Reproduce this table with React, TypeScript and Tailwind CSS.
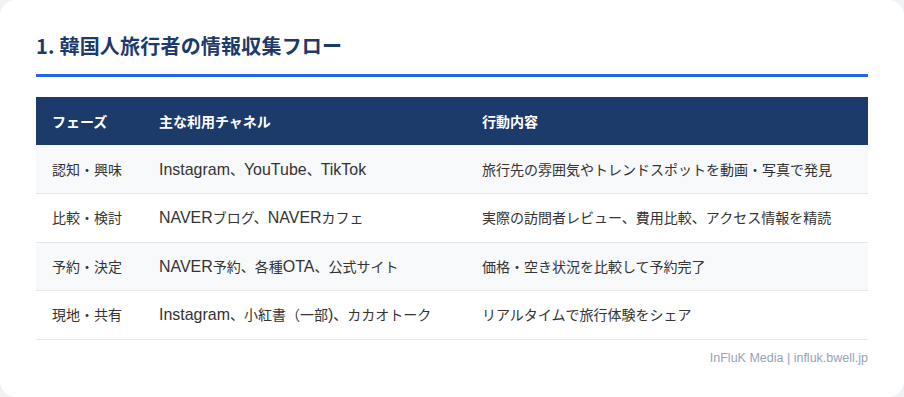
const rows = [
  ['認知・興味', 'Instagram、YouTube、TikTok', '旅行先の雰囲気やトレンドスポットを動画・写真で発見'],
  ['比較・検討', 'NAVERブログ、NAVERカフェ', '実際の訪問者レビュー、費用比較、アクセス情報を精読'],
  ['予約・決定', 'NAVER予約、各種OTA、公式サイト', '価格・空き状況を比較して予約完了'],
  ['現地・共有', 'Instagram、小紅書（一部)、カカオトーク', 'リアルタイムで旅行体験をシェア'],
]

// Latin runs are set a bit larger so they sit like the Hiragino-style Latin glyphs
const Mixed = ({ text }: { text: string }) => (
  <>
    {text.split(/([A-Za-z0-9.)]+(?: [A-Za-z0-9.]+)*)/).map((part, i) =>
      i % 2 === 1 ? (
        <span key={i} className="font-['Liberation_Sans',sans-serif] text-[1.14em] leading-none">
          {part}
        </span>
      ) : (
        <span key={i}>{part}</span>
      )
    )}
  </>
)

const App = () => {
  return (
    <div className="w-[904px] h-[397px] bg-[#f1f2f4] font-['Noto_Sans_CJK_JP',sans-serif]">
      <div className="h-full bg-white rounded-2xl px-9 pt-8">
        {/* Title */}
        <h2 className="text-[20px] leading-7 font-bold text-[#1c3a6a] pb-[14px] border-b-[3px] border-[#2563eb] tracking-[0.01em]">
          1. 韓国人旅行者の情報収集フロー
        </h2>

        {/* Table */}
        <table className="w-full mt-5 border-collapse text-[14px] text-[#333]">
          <thead>
            <tr className="bg-[#1c3a6a] text-white h-12">
              <th className="w-[107px] pl-4 text-left font-bold">フェーズ</th>
              <th className="w-[323px] pl-4 text-left font-bold">主な利用チャネル</th>
              <th className="pl-4 text-left font-bold">行動内容</th>
            </tr>
          </thead>
          <tbody>
            {rows.map((r, i) => (
              <tr
                key={r[0]}
                className={`h-[48.5px] border-b border-[#e5e7eb] ${i % 2 === 0 ? 'bg-[#f8f9fb]' : 'bg-white'}`}
              >
                <td className="pl-4">{r[0]}</td>
                <td className="pl-4"><Mixed text={r[1]} /></td>
                <td className="pl-4">{r[2]}</td>
              </tr>
            ))}
          </tbody>
        </table>

        <p className="mt-[9px] text-right text-[12.5px] text-[#94a3b8] font-['Liberation_Sans',sans-serif]">
          InFluK Media | influk.bwell.jp
        </p>
      </div>
    </div>
  )
}

export default App
